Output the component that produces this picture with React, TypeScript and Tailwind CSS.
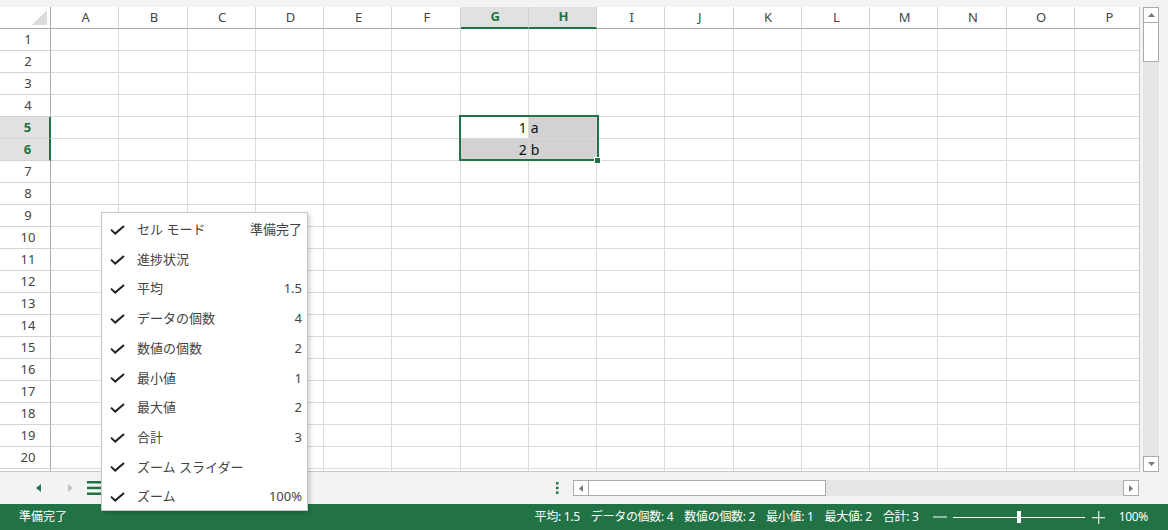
import React from "react";

const cols = ["A", "B", "C", "D", "E", "F", "G", "H", "I", "J", "K", "L", "M", "N", "O", "P"];
const rows = Array.from({ length: 21 }, (_, i) => i + 1);

// G5:H6 is the selected block, G5 is the active cell
const values: Record<string, string> = { G5: "1", H5: "a", G6: "2", H6: "b" };
const numeric = new Set(["G5", "G6"]);
const shaded = new Set(["H5", "G6", "H6"]);
const selCols = new Set(["G", "H"]);
const selRows = new Set([5, 6]);

const menu = [
  { label: "セル モード", value: "準備完了" },
  { label: "進捗状況", value: "" },
  { label: "平均", value: "1.5" },
  { label: "データの個数", value: "4" },
  { label: "数値の個数", value: "2" },
  { label: "最小値", value: "1" },
  { label: "最大値", value: "2" },
  { label: "合計", value: "3" },
  { label: "ズーム スライダー", value: "" },
  { label: "ズーム", value: "100%" },
];

const stats = ["平均: 1.5", "データの個数: 4", "数値の個数: 2", "最小値: 1", "最大値: 2", "合計: 3"];

function Check() {
  return (
    <svg width="15" height="10" viewBox="0 0 15 10" fill="none">
      <path d="M1 4.6 L5.2 8.6 L14 0.9" stroke="#222" strokeWidth="2" />
    </svg>
  );
}

function Corner() {
  return (
    <div className="flex items-end justify-end h-full border-r border-b border-[#ababab] pr-[3px] pb-[3px]">
      <svg width="15" height="15" viewBox="0 0 15 15">
        <polygon points="15,0 15,15 0,15" fill="#dcdcdc" />
      </svg>
    </div>
  );
}

function Sheet() {
  return (
    <div className="relative w-[1140px] h-[465px] overflow-hidden border-r border-b border-[#c8c8c8] bg-white">
      <div className="grid grid-cols-[51px_repeat(16,68.25px)] auto-rows-[22px] text-[13px] text-[#444]">
        <Corner />
        {cols.map((c) =>
          selCols.has(c) ? (
            <div
              key={c}
              className="flex items-center justify-center pl-[2px] bg-[#e1e1e1] border-r border-[#d4d4d4] border-b-2 border-b-[#217346] text-[#217346] font-bold"
            >
              {c}
            </div>
          ) : (
            <div key={c} className="flex items-center justify-center pl-[2px] border-r border-[#d4d4d4] border-b border-b-[#ababab]">
              {c}
            </div>
          )
        )}
        {rows.map((r) => (
          <React.Fragment key={r}>
            {selRows.has(r) ? (
              <div className="flex items-center justify-center pl-[6px] bg-[#e1e1e1] border-b border-[#d4d4d4] border-r-2 border-r-[#217346] text-[#217346] font-bold">
                {r}
              </div>
            ) : (
              <div className="flex items-center justify-center pl-[6px] border-b border-[#d4d4d4] border-r border-r-[#ababab]">{r}</div>
            )}
            {cols.map((c) => {
              const id = `${c}${r}`;
              const v = values[id];
              return (
                <div
                  key={id}
                  className={`flex items-center border-r border-b border-[#dadada] pl-[2px] pr-[1px] text-[14px] text-[#111] ${
                    shaded.has(id) ? "bg-[#d2d2d2]" : ""
                  } ${numeric.has(id) ? "justify-end" : "justify-start"}`}
                >
                  {v}
                </div>
              );
            })}
          </React.Fragment>
        ))}
      </div>
      {/* selection outline + fill handle */}
      <div className="absolute left-[459px] top-[108px] w-[140px] h-[46px] border-2 border-[#217346]" />
      <div className="absolute left-[594px] top-[150px] w-[7px] h-[7px] bg-[#217346] border border-white" />
    </div>
  );
}

function VScroll() {
  return (
    <div className="flex flex-col w-[16px] h-[465px] ml-[3px]">
      <div className="flex items-center justify-center h-[16px] bg-white border border-[#ababab]">
        <svg width="7" height="4" viewBox="0 0 7 4">
          <polygon points="0,4 7,4 3.5,0" fill="#777" />
        </svg>
      </div>
      <div className="h-[39px] bg-white border border-[#ababab] border-t-0" />
      <div className="flex-1 bg-[#e6e6e6]" />
      <div className="flex items-center justify-center h-[16px] bg-white border border-[#ababab]">
        <svg width="7" height="4" viewBox="0 0 7 4">
          <polygon points="0,0 7,0 3.5,4" fill="#777" />
        </svg>
      </div>
    </div>
  );
}

function BottomStrip() {
  return (
    <div className="flex items-center h-[32px] bg-[#f3f3f3]">
      <svg className="ml-[36px]" width="5" height="8" viewBox="0 0 5 8">
        <polygon points="5,0 5,8 0,4" fill="#217346" />
      </svg>
      <svg className="ml-[27px]" width="5" height="8" viewBox="0 0 5 8">
        <polygon points="0,0 0,8 5,4" fill="#c3c3c3" />
      </svg>
      <svg className="ml-[14px]" width="15" height="14" viewBox="0 0 15 14">
        <rect x="0" y="0" width="15" height="2.5" fill="#217346" />
        <rect x="0" y="5.7" width="15" height="2.5" fill="#217346" />
        <rect x="0" y="11.5" width="15" height="2.5" fill="#217346" />
      </svg>
      <svg className="ml-auto" width="3" height="12" viewBox="0 0 3 12">
        <rect x="0" y="0" width="2.5" height="2.5" fill="#217346" />
        <rect x="0" y="4.7" width="2.5" height="2.5" fill="#217346" />
        <rect x="0" y="9.4" width="2.5" height="2.5" fill="#217346" />
      </svg>
      <div className="flex h-[16px] w-[566px] ml-[14px] mr-[29px]">
        <div className="flex items-center justify-center w-[16px] bg-white border border-[#ababab]">
          <svg width="4" height="7" viewBox="0 0 4 7">
            <polygon points="4,0 4,7 0,3.5" fill="#777" />
          </svg>
        </div>
        <div className="w-[237px] bg-white border border-[#ababab] border-l-0" />
        <div className="flex-1 bg-[#e6e6e6]" />
        <div className="flex items-center justify-center w-[16px] bg-white border border-[#ababab]">
          <svg width="4" height="7" viewBox="0 0 4 7">
            <polygon points="0,0 0,7 4,3.5" fill="#777" />
          </svg>
        </div>
      </div>
    </div>
  );
}

function StatusBar() {
  return (
    <div className="flex items-center h-[26px] bg-[#217346] text-white text-[12px]">
      <span className="pl-[19px]">準備完了</span>
      <div className="ml-auto flex items-center gap-[11px] tracking-[-0.3px]">
        {stats.map((s) => (
          <span key={s}>{s}</span>
        ))}
      </div>
      <div className="flex items-center ml-[14px]">
        <div className="w-[14px] h-[2px] bg-[#8fb9a2]" />
        <div className="relative w-[132px] h-[1px] bg-white ml-[6px] mr-[7px]">
          <div className="absolute left-[64px] top-[-6px] w-[4px] h-[12px] bg-white" />
        </div>
        <svg width="13" height="13" viewBox="0 0 13 13">
          <rect x="0" y="6" width="13" height="1.3" fill="#d9e8df" />
          <rect x="6" y="0" width="1.3" height="13" fill="#d9e8df" />
        </svg>
      </div>
      <span className="ml-[14px] pr-[20px] tracking-[-0.3px]">100%</span>
    </div>
  );
}

function StatusMenu() {
  return (
    <div className="absolute left-[101px] top-[212px] w-[207px] h-[299px] pt-[2px] bg-white border border-[#c6c6c6] shadow-[2px_2px_4px_rgba(0,0,0,0.18)] text-[13px] text-[#444]">
      {menu.map((m) => (
        <div key={m.label} className="flex items-center h-[29.7px] pl-[8px] pr-[5px]">
          <div className="w-[27px]">
            <Check />
          </div>
          <span>{m.label}</span>
          <span className="ml-auto">{m.value}</span>
        </div>
      ))}
    </div>
  );
}

export default function App() {
  return (
    <div
      className="relative w-[1168px] h-[530px] overflow-hidden bg-[#f3f3f3] flex flex-col"
      style={{ fontFamily: '"Noto Sans", "Noto Sans CJK JP", sans-serif' }}
    >
      <div className="h-[7px]" />
      <div className="flex h-[465px]">
        <Sheet />
        <VScroll />
      </div>
      <BottomStrip />
      <StatusBar />
      <StatusMenu />
    </div>
  );
}
